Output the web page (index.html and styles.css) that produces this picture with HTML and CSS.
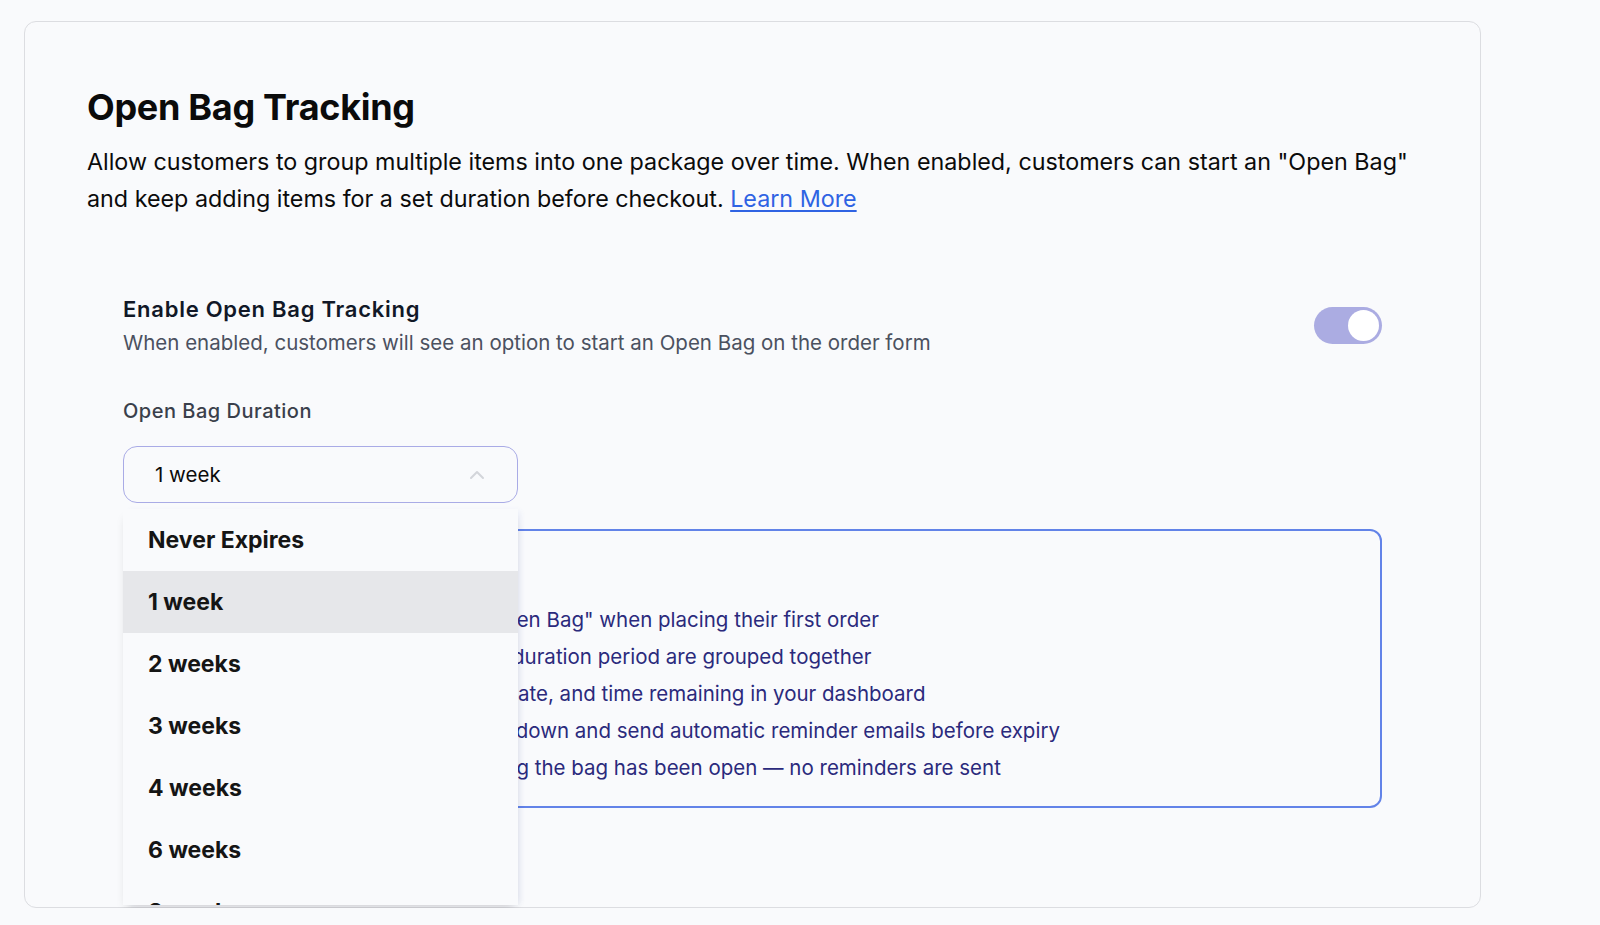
FILE: index.html
```html
<!DOCTYPE html>
<html>
<head>
	<link rel="stylesheet" href="styles.css">
	<title>Open Bag Tracking</title>
</head>
<body>
	<div class="card">
		<h1 class="title">Open Bag Tracking</h1>
		<p class="intro">Allow customers to group multiple items into one package over time. When enabled, customers can start an "Open Bag" and keep adding items for a set duration before checkout. <a href="#" class="link">Learn More</a></p>

		<div class="settings">
			<div class="row">
				<div class="row-text">
					<div class="row-title">Enable Open Bag Tracking</div>
					<div class="row-sub">When enabled, customers will see an option to start an Open Bag on the order form</div>
				</div>
				<div class="toggle"><span class="knob"></span></div>
			</div>

			<div class="field">
				<div class="label">Open Bag Duration</div>
				<div class="select-wrap">
					<div class="select">
						<span>1 week</span>
						<svg class="chevron" width="16" height="10" viewBox="0 0 16 10"><path d="M2 8 L8 2 L14 8" fill="none" stroke="#d3d5da" stroke-width="2" stroke-linecap="round" stroke-linejoin="round"/></svg>
					</div>
					<ul class="menu">
						<li>Never Expires</li>
						<li class="active">1 week</li>
						<li>2 weeks</li>
						<li>3 weeks</li>
						<li>4 weeks</li>
						<li>6 weeks</li>
						<li>8 weeks</li>
					</ul>
				</div>
			</div>

			<div class="info">
				<div class="info-title">How it works:</div>
				<ul class="info-list">
					<li>Customers can elect to start an "Open Bag" when placing their first order</li>
					<li>Additional orders placed within the duration period are grouped together</li>
					<li>View each bag's start date, expiry date, and time remaining in your dashboard</li>
					<li>Timed bags display a running countdown and send automatic reminder emails before expiry</li>
					<li>"Never Expires" bags show how long the bag has been open — no reminders are sent</li>
				</ul>
			</div>
		</div>
	</div>
</body>
</html>
```

FILE: styles.css
```css
body{
	margin: 0;
	padding: 21px 0 0 24px;
	background-color: #f9fafc;
	font-family: 'Inter', 'Noto Sans', sans-serif;
	color: #0b0b0b;
}
.card{
	width: 1457px;
	box-sizing: border-box;
	border: 1px solid #dcdde1;
	border-radius: 12px;
	background-color: #f9fafc;
	padding: 63px 62px 99px 62px;
}
.title{
	margin: 0;
	font-size: 36px;
	line-height: 44px;
	font-weight: 700;
	letter-spacing: -0.3px;
}
.intro{
	margin: 14px 0 0 0;
	font-size: 23.3px;
	line-height: 37px;
}
.link{
	color: #2f63e3;
	text-decoration: underline;
	text-underline-offset: 3px;
}
.settings{
	margin-top: 78px;
	padding: 0 36px;
}
.row{
	display: flex;
	align-items: center;
	justify-content: space-between;
}
.row-title{
	font-size: 22px;
	line-height: 28px;
	font-weight: 600;
	letter-spacing: 0.75px;
	color: #111827;
}
.row-sub{
	margin-top: 7px;
	font-size: 20.5px;
	line-height: 26px;
	color: #4b5160;
}
.toggle{
	width: 68px;
	height: 37px;
	border-radius: 19px;
	background-color: #abace2;
	display: flex;
	align-items: center;
	justify-content: flex-end;
	padding: 0 3px;
	box-sizing: border-box;
}
.knob{
	width: 31px;
	height: 31px;
	border-radius: 50%;
	background-color: #ffffff;
}
.field{
	margin-top: 42px;
}
.label{
	font-size: 20px;
	line-height: 26px;
	font-weight: 500;
	letter-spacing: 0.5px;
	color: #3a3f4b;
	margin-bottom: 22px;
}
.select-wrap{
	position: relative;
	width: 395px;
}
.select{
	height: 57px;
	box-sizing: border-box;
	border: 1px solid #a9abe6;
	border-radius: 14px;
	display: flex;
	align-items: center;
	justify-content: space-between;
	padding: 0 32px 0 31px;
	font-size: 20.5px;
}
.menu{
	position: absolute;
	top: 63px;
	left: 0;
	width: 100%;
	max-height: 396px;
	overflow: hidden;
	margin: 0;
	padding: 0;
	list-style: none;
	background-color: #f9fafc;
	box-shadow: 0 6px 10px -4px rgba(0,0,0,0.18), 4px 0 6px -2px rgba(60,90,200,0.08);
	z-index: 2;
}
.menu li{
	height: 62px;
	display: flex;
	align-items: center;
	padding-left: 25px;
	font-size: 23px;
	font-weight: 700;
	color: #151515;
}
.menu li.active{
	background-color: #e6e7ea;
}
.info{
	margin-top: 26px;
	border: 2px solid #6283e8;
	border-radius: 12px;
	padding: 21px 23px 20px 23px;
	color: #2b2a7c;
}
.info-title{
	font-size: 20px;
	line-height: 28px;
	font-weight: 600;
	margin-bottom: 21px;
}
.info-list{
	margin: 0;
	padding-left: 22px;
	font-size: 20.5px;
	line-height: 37px;
}
```
